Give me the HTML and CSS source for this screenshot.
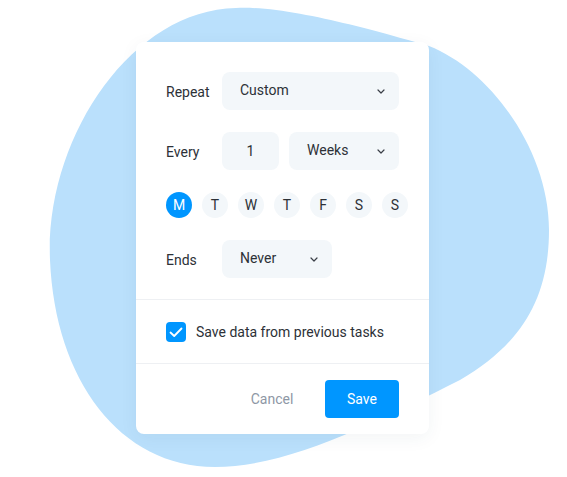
FILE: index.html
```html
<!DOCTYPE html>
<html>
<head>
<meta charset="utf-8">
<link rel="stylesheet" href="styles.css">
</head>
<body>
<div class="stage">
  <svg class="blob" width="567" height="477" viewBox="0 0 567 477" aria-hidden="true">
    <path d="M236 8 C290 5 390 35 429 46 C490 70 549 150 549 230 C549 300 520 345 460 380 C380 420 290 467 215 467 C120 467 55 380 50 260 C45 140 130 10 236 8 Z" fill="#bae0fc"/>
  </svg>
  <div class="card">
    <div class="section form">
      <div class="row">
        <span class="label">Repeat</span>
        <div class="select w-wide"><span>Custom</span><svg class="chev" width="8" height="5" viewBox="0 0 8 5"><path d="M1 1 L4 4 L7 1" fill="none" stroke="#3a3f47" stroke-width="1.2" stroke-linecap="round" stroke-linejoin="round"/></svg></div>
      </div>
      <div class="row">
        <span class="label">Every</span>
        <div class="field num">1</div>
        <div class="select w-mid"><span>Weeks</span><svg class="chev" width="8" height="5" viewBox="0 0 8 5"><path d="M1 1 L4 4 L7 1" fill="none" stroke="#3a3f47" stroke-width="1.2" stroke-linecap="round" stroke-linejoin="round"/></svg></div>
      </div>
      <div class="days">
        <span class="day active">M</span>
        <span class="day">T</span>
        <span class="day">W</span>
        <span class="day">T</span>
        <span class="day">F</span>
        <span class="day">S</span>
        <span class="day">S</span>
      </div>
      <div class="row">
        <span class="label">Ends</span>
        <div class="select w-mid"><span>Never</span><svg class="chev" width="8" height="5" viewBox="0 0 8 5"><path d="M1 1 L4 4 L7 1" fill="none" stroke="#3a3f47" stroke-width="1.2" stroke-linecap="round" stroke-linejoin="round"/></svg></div>
      </div>
    </div>
    <div class="section check-section">
      <span class="checkbox"><svg width="14" height="11" viewBox="0 0 14 11"><path d="M1.5 5.5 L5.2 9 L12.5 1.5" fill="none" stroke="#fff" stroke-width="1.8" stroke-linecap="round" stroke-linejoin="round"/></svg></span>
      <span class="check-label">Save data from previous tasks</span>
    </div>
    <div class="footer">
      <button class="btn cancel">Cancel</button>
      <button class="btn save">Save</button>
    </div>
  </div>
</div>
</body>
</html>
```
FILE: styles.css
```css
* { box-sizing: border-box; }
html, body { margin: 0; padding: 0; background: #fff; }
body { font-family: Roboto, "Noto Sans", Arial, sans-serif; font-size: 14px; color: #2d3137; }

.stage {
  position: relative;
  width: 567px;
  height: 477px;
  padding: 42px 0 0 136px;
  overflow: hidden;
}
.blob { position: absolute; left: 0; top: 0; }

.card {
  position: relative;
  width: 293px;
  height: 392px;
  background: #fff;
  border-radius: 8px;
  box-shadow: 0 4px 18px rgba(40, 60, 90, 0.06);
  display: flex;
  flex-direction: column;
}

.section.form {
  padding: 30px 20px 21px 30px;
  display: flex;
  flex-direction: column;
  gap: 22px;
  border-bottom: 1px solid #eef0f3;
}

.row { display: flex; align-items: center; height: 38px; }
.label { width: 56px; flex-shrink: 0; line-height: 38px; padding-top: 1px; }

.select, .field {
  height: 38px;
  flex-shrink: 0;
  background: #f3f7fa;
  border-radius: 8px;
  display: flex;
  align-items: center;
}
.select { padding: 0 14px 0 18px; justify-content: space-between; }
.select span { margin-top: -2px; }
.w-wide { width: 177px; }
.w-mid { width: 110px; }
.num { width: 57px; justify-content: center; margin-right: 10px; }
.chev { display: block; }

.days { display: flex; gap: 10px; height: 26px; }
.day {
  width: 26px;
  height: 26px;
  flex-shrink: 0;
  border-radius: 50%;
  background: #f3f7fa;
  display: flex;
  align-items: center;
  justify-content: center;
  font-size: 14px;
}
.day.active { background: #0096ff; color: #fff; }

.check-section {
  padding: 22px 30px 21px;
  display: flex;
  align-items: center;
  gap: 10px;
  border-bottom: 1px solid #eef0f3;
}
.checkbox {
  width: 20px;
  height: 20px;
  border-radius: 4px;
  background: #0096ff;
  display: flex;
  align-items: center;
  justify-content: center;
}
.check-label { line-height: 20px; }

.footer {
  padding: 16px 30px;
  display: flex;
  justify-content: flex-end;
  gap: 16px;
}
.btn {
  width: 74px;
  height: 38px;
  border: 0;
  border-radius: 4px;
  font-family: inherit;
  font-size: 14px;
  background: transparent;
  padding: 0;
  cursor: pointer;
}
.cancel { color: #8e97a5; }
.save { background: #0096ff; color: #fff; }
```
